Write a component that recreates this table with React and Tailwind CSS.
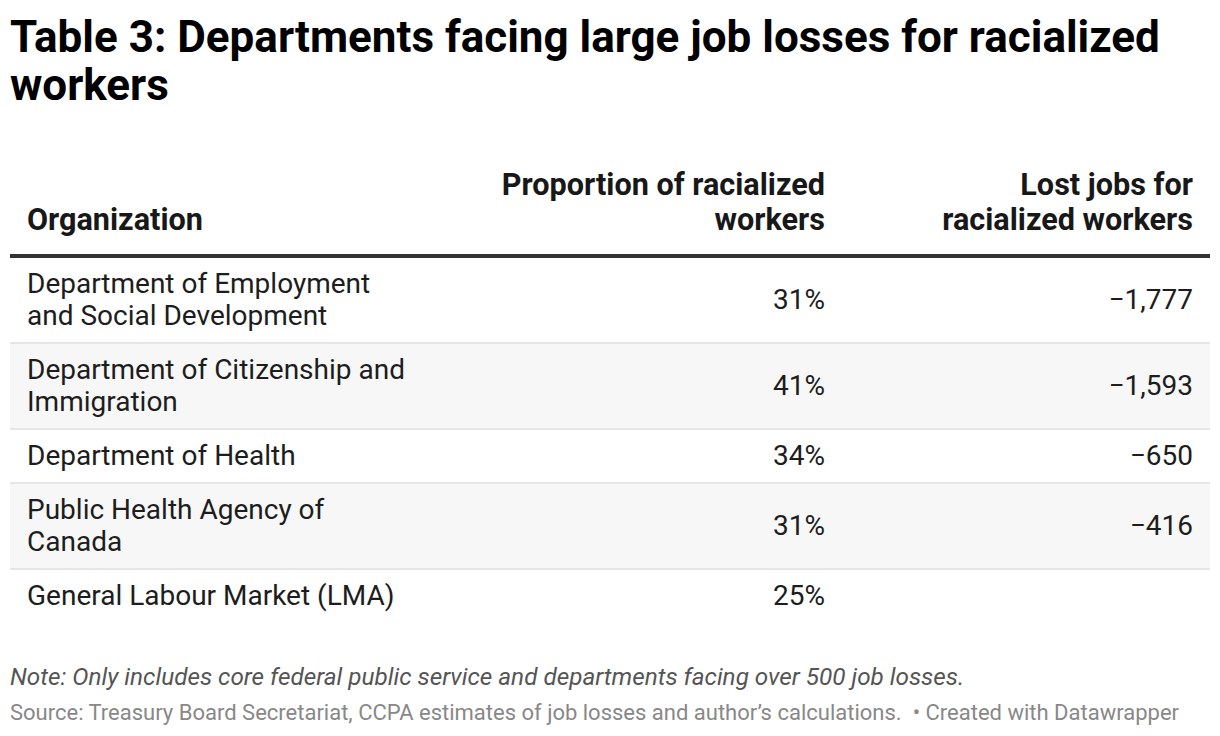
import React from 'react';

const rows = [
    { org: ['Department of Employment', 'and Social Development'], pct: '31%', lost: '−1,777' },
    { org: ['Department of Citizenship and', 'Immigration'], pct: '41%', lost: '−1,593' },
    { org: ['Department of Health'], pct: '34%', lost: '−650' },
    { org: ['Public Health Agency of', 'Canada'], pct: '31%', lost: '−416' },
    { org: ['General Labour Market (LMA)'], pct: '25%', lost: '' },
];

const App = () => {
    return (
        <div className="w-[1220px] h-[736px] bg-white px-[10px] pt-[13px] text-[#1d1d1d] font-['Roboto',sans-serif]">
            <h1 className="text-[44px] leading-[48px] font-bold text-[#000] pr-[20px]">
                Table 3: Departments facing large job losses for racialized workers
            </h1>

            <div className="mt-[58px]">
                <div className="grid grid-cols-[430px_402px_1fr] border-b-[4px] border-[#333] pb-[17px] text-[30.6px] leading-[35px] font-bold text-[#181818]">
                    <div className="px-[17px] self-end">Organization</div>
                    <div className="px-[17px] text-right self-end">
                        Proportion of racialized
                        <br />
                        workers
                    </div>
                    <div className="px-[17px] text-right self-end">
                        Lost jobs for
                        <br />
                        racialized workers
                    </div>
                </div>

                {rows.map((row, i) => (
                    <div
                        key={i}
                        className={`grid grid-cols-[430px_402px_1fr] items-center py-[10px] text-[28px] leading-[32px] ${i % 2 === 1 ? 'bg-[#f7f7f7]' : 'bg-white'} ${i < rows.length - 1 ? 'border-b-2 border-[#e6e6e6]' : ''}`}
                    >
                        <div className="px-[17px]">
                            {row.org.map((line, j) => (
                                <div key={j}>{line}</div>
                            ))}
                        </div>
                        <div className="px-[17px] text-right">{row.pct}</div>
                        <div className="px-[17px] text-right">{row.lost}</div>
                    </div>
                ))}
            </div>

            <p className="mt-[40px] text-[24.3px] leading-[30px] italic text-[#555]">
                Note: Only includes core federal public service and departments facing over 500 job losses.
            </p>
            <p className="mt-[7px] text-[22px] leading-[28px] text-[#888] whitespace-nowrap">
                Source: Treasury Board Secretariat, CCPA estimates of job losses and author’s calculations.
                <span className="ml-[11px]">• Created with Datawrapper</span>
            </p>
        </div>
    );
};

export default App;
